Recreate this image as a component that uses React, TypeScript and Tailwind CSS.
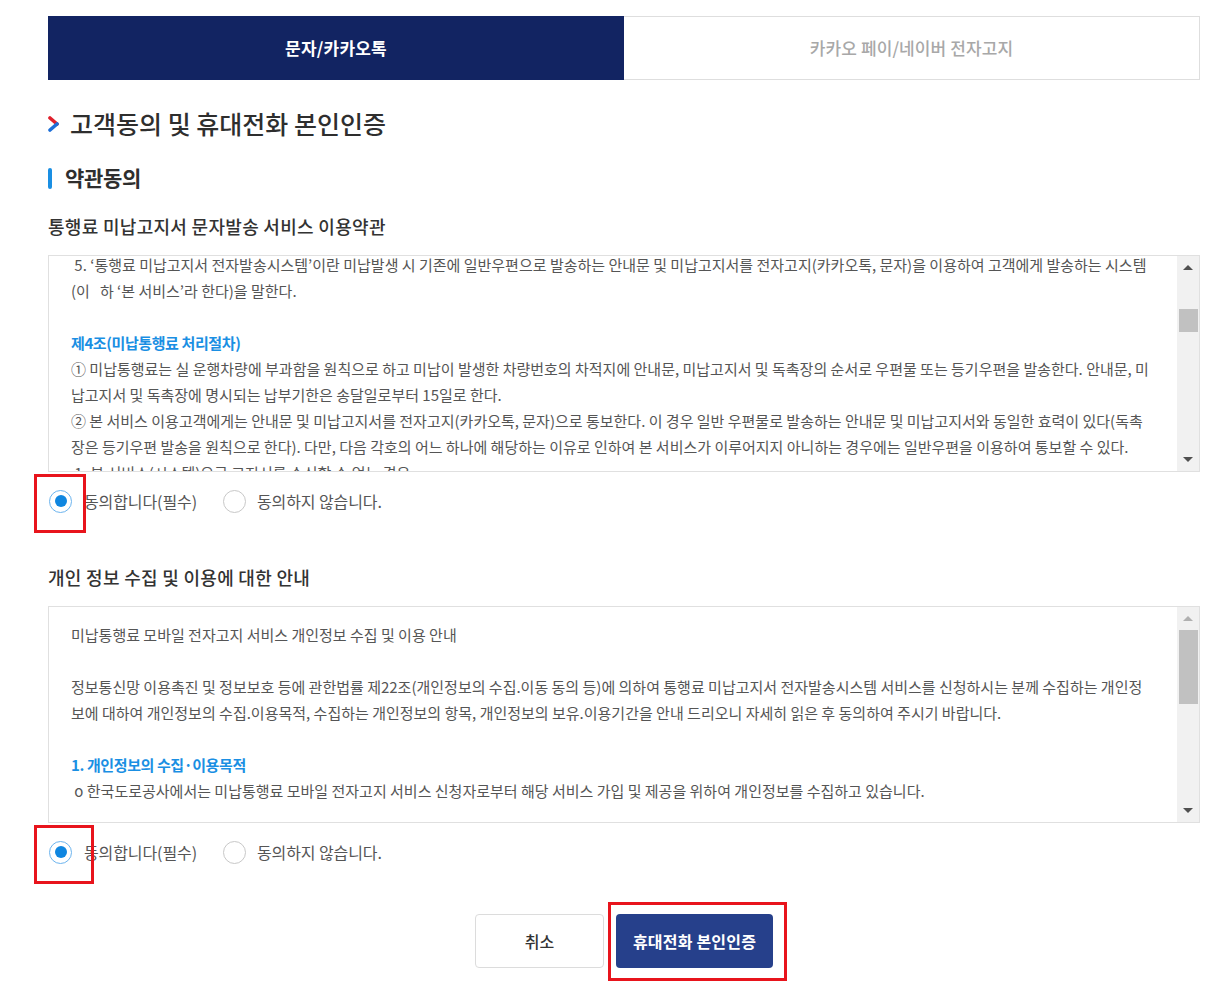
import React from "react";

const FONT = { fontFamily: '"Noto Sans CJK KR", "Noto Sans", sans-serif' };

function ScrollTrack({ thumbTop, thumbHeight, upLight = false }: { thumbTop: number; thumbHeight: number; upLight?: boolean }) {
  return (
    <div className="relative w-[22px] shrink-0 bg-[#f1f1f1]">
      {/* arrows */}
      <div className="absolute left-0 right-0 top-[9px] flex justify-center">
        <div
          className={`h-0 w-0 border-x-[5px] border-b-[5px] border-x-transparent ${upLight ? "border-b-[#b0b0b0]" : "border-b-[#505050]"}`}
        />
      </div>
      <div
        className="absolute left-[2px] right-[1px] bg-[#c1c1c1]"
        style={{ top: thumbTop, height: thumbHeight }}
      />
      <div className="absolute bottom-[9px] left-0 right-0 flex justify-center">
        <div className="h-0 w-0 border-x-[5px] border-t-[5px] border-x-transparent border-t-[#505050]" />
      </div>
    </div>
  );
}

function Line({ children, blue = false, top = false }: { children?: React.ReactNode; blue?: boolean; top?: boolean }) {
  return (
    <div
      className={`whitespace-nowrap ${top ? "h-[22px] leading-[18px]" : "h-[26px] leading-[26px]"} ${blue ? "font-bold tracking-[-0.4px] text-[#1a8fe3]" : "text-[#555]"}`}
    >
      {children ?? "\u00a0"}
    </div>
  );
}

function Radio({ checked }: { checked: boolean }) {
  return (
    <span
      className={`flex h-[23px] w-[23px] items-center justify-center rounded-full border bg-white ${checked ? "border-[#6cb4ee]" : "border-[#c8c8c8]"}`}
    >
      {checked && <span className="h-[12px] w-[12px] rounded-full bg-[#0f86e0]" />}
    </span>
  );
}

function AgreeRow({ highlightWidth }: { highlightWidth: number }) {
  return (
    <div className="relative flex h-[24px] items-center text-[16px] tracking-[-0.1px] text-[#555]">
      <div className="relative ml-[1px] flex items-center">
        <Radio checked />
        <div
          className="absolute left-[-15px] top-[-16px] h-[59px] border-[3px] border-[#e8141c]"
          style={{ width: highlightWidth }}
        />
      </div>
      <span className="ml-[12px]">동의합니다(필수)</span>
      <span className="ml-[26px]">
        <Radio checked={false} />
      </span>
      <span className="ml-[11px]">동의하지 않습니다.</span>
    </div>
  );
}

export default function App() {
  return (
    <div className="min-h-[995px] bg-white" style={FONT}>
      <div className="ml-[48px] w-[1152px] pt-[16px]">
        {/* tabs */}
        <div className="flex h-[64px]">
          <div className="flex w-[576px] items-center justify-center bg-[#122462] text-[17px] font-bold tracking-[0.2px] text-white">
            문자/카카오톡
          </div>
          <div className="flex flex-1 items-center justify-center border border-l-0 border-[#dedede] text-[17px] font-medium tracking-[0.1px] text-[#a8a8a8]">
            카카오 페이/네이버 전자고지
          </div>
        </div>

        {/* title */}
        <div className="mt-[28px] flex h-[32px] items-center">
          <svg width="12" height="18" viewBox="0 0 12 18" className="shrink-0">
            <path d="M2 3 L9 9" stroke="#e0202c" strokeWidth="3.6" strokeLinecap="round" fill="none" />
            <path d="M9 9 L2 15" stroke="#1d6fd8" strokeWidth="3.6" strokeLinecap="round" fill="none" />
          </svg>
          <h1 className="ml-[10px] text-[25px] font-medium tracking-[0px] text-[#2e2e2e]">
            고객동의 및 휴대전화 본인인증
          </h1>
        </div>

        {/* section */}
        <div className="mt-[24px] flex h-[28px] items-center">
          <span className="h-[21px] w-[4px] rounded-full bg-[#1a8fe3]" />
          <h2 className="ml-[13px] text-[21px] font-bold tracking-[-0.3px] text-[#2e2e2e]">약관동의</h2>
        </div>

        <h3 className="mt-[21px] h-[26px] text-[18px] font-medium leading-[26px] tracking-[0.3px] text-[#333]">
          통행료 미납고지서 문자발송 서비스 이용약관
        </h3>

        <div className="mt-[16px] flex h-[217px] border border-[#e0e0e0]">
          <div className="flex-1 overflow-hidden pl-[22px] text-[15px] tracking-[0px]">
            <Line top>&nbsp;5. ‘통행료 미납고지서 전자발송시스템’이란 미납발생 시 기존에 일반우편으로 발송하는 안내문 및 미납고지서를 전자고지(카카오톡, 문자)을 이용하여 고객에게 발송하는 시스템</Line>
            <Line>(이&nbsp;&nbsp;&nbsp;하 ‘본 서비스’라 한다)을 말한다.</Line>
            <Line />
            <Line blue>제4조(미납통행료 처리절차)</Line>
            <Line>① 미납통행료는 실 운행차량에 부과함을 원칙으로 하고 미납이 발생한 차량번호의 차적지에 안내문, 미납고지서 및 독촉장의 순서로 우편물 또는 등기우편을 발송한다. 안내문, 미</Line>
            <Line>납고지서 및 독촉장에 명시되는 납부기한은 송달일로부터 15일로 한다.</Line>
            <Line>② 본 서비스 이용고객에게는 안내문 및 미납고지서를 전자고지(카카오톡, 문자)으로 통보한다. 이 경우 일반 우편물로 발송하는 안내문 및 미납고지서와 동일한 효력이 있다(독촉</Line>
            <Line>장은 등기우편 발송을 원칙으로 한다). 다만, 다음 각호의 어느 하나에 해당하는 이유로 인하여 본 서비스가 이루어지지 아니하는 경우에는 일반우편을 이용하여 통보할 수 있다.</Line>
            <Line>&nbsp;1. 본 서비스(시스템)으로 고지서를 수신할 수 없는 경우</Line>
          </div>
          <ScrollTrack thumbTop={53} thumbHeight={23} />
        </div>

        <div className="mt-[17px]">
          <AgreeRow highlightWidth={52} />
        </div>

        <h3 className="mt-[51px] h-[26px] text-[18px] font-medium leading-[26px] tracking-[0.3px] text-[#333]">
          개인 정보 수집 및 이용에 대한 안내
        </h3>

        <div className="mt-[16px] flex h-[217px] border border-[#e0e0e0]">
          <div className="flex-1 overflow-hidden pl-[22px] pt-[15px] text-[15px] tracking-[0px]">
            <Line>미납통행료 모바일 전자고지 서비스 개인정보 수집 및 이용 안내</Line>
            <Line />
            <Line>정보통신망 이용촉진 및 정보보호 등에 관한법률 제22조(개인정보의 수집.이동 동의 등)에 의하여 통행료 미납고지서 전자발송시스템 서비스를 신청하시는 분께 수집하는 개인정</Line>
            <Line>보에 대하여 개인정보의 수집.이용목적, 수집하는 개인정보의 항목, 개인정보의 보유.이용기간을 안내 드리오니 자세히 읽은 후 동의하여 주시기 바랍니다.</Line>
            <Line />
            <Line blue>1. 개인정보의 수집·이용목적</Line>
            <Line>&nbsp;o 한국도로공사에서는 미납통행료 모바일 전자고지 서비스 신청자로부터 해당 서비스 가입 및 제공을 위하여 개인정보를 수집하고 있습니다.</Line>
            <Line />
          </div>
          <ScrollTrack thumbTop={23} thumbHeight={74} upLight />
        </div>

        <div className="mt-[17px]">
          <AgreeRow highlightWidth={60} />
        </div>

        {/* buttons */}
        <div className="mt-[50px] flex justify-center gap-[12px]">
          <button
            type="button"
            className="h-[54px] w-[129px] rounded-[4px] border border-[#dcdcdc] bg-white text-[16px] font-medium text-[#333]"
          >
            취소
          </button>
          <div className="relative">
            <button
              type="button"
              className="h-[54px] w-[157px] rounded-[4px] bg-[#26408b] text-[16px] font-bold tracking-[0.2px] text-white"
            >
              휴대전화 본인인증
            </button>
            <div className="absolute left-[-8px] top-[-12px] h-[79px] w-[179px] border-[3px] border-[#e8141c]" />
          </div>
        </div>
      </div>
    </div>
  );
}
